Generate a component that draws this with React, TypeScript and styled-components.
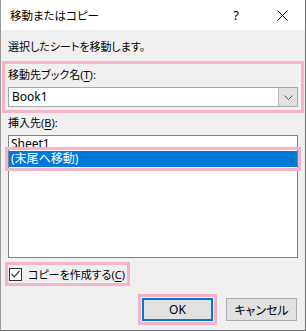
import React from 'react';
import styled, { createGlobalStyle } from 'styled-components';

const GlobalStyle = createGlobalStyle`
  html, body {
    margin: 0;
    padding: 0;
    background: #f0f0f0;
  }
  body {
    font-family: "Noto Sans", "Noto Sans CJK JP", sans-serif;
    font-size: 11px;
    color: #000;
  }
`;

const pink = '#f4b3c9';

const Window = styled.div`
  box-sizing: border-box;
  width: 306px;
  height: 331px;
  background: #f0f0f0;
  border-left: 1px solid #9a9a9a;
  border-right: 1px solid #6e6e6e;
  border-bottom: 1px solid #6e6e6e;
  display: flex;
  flex-direction: column;
  font-feature-settings: "palt";
`;

const TitleBar = styled.div`
  height: 30px;
  background: #fff;
  display: flex;
  align-items: center;
  padding-left: 9px;
  flex-shrink: 0;
`;

const Title = styled.span`
  flex: 1;
  font-size: 11.5px;
`;

const TitleButton = styled.div`
  width: 46px;
  height: 30px;
  display: flex;
  align-items: center;
  justify-content: center;
  font-size: 13px;
`;

const Body = styled.div`
  padding: 0 7px;
  display: flex;
  flex-direction: column;
`;

const Message = styled.div`
  height: 16px;
  line-height: 16px;
  margin-top: 9px;
`;

const Section = styled.div`
  outline: 3px solid ${pink};
  margin: 9px -3px 0;
  padding: 3px 3px 3px;
`;

const Label = styled.div`
  height: 16px;
  line-height: 16px;
`;

const Key = styled.span`
  text-decoration: underline;
  text-underline-offset: 2px;
`;

const Combo = styled.div`
  margin-top: 4px;
  height: 20px;
  box-sizing: border-box;
  border: 1px solid #a8a8a8;
  background: #fff;
  display: flex;
  align-items: center;
`;

const ComboText = styled.span`
  flex: 1;
  padding-left: 3px;
  line-height: 16px;
  font-size: 12px;
`;

const DropButton = styled.div`
  width: 18px;
  height: 18px;
  border-left: 1px solid #b9b9b9;
  background: #e1e1e1;
  display: flex;
  align-items: center;
  justify-content: center;
`;

const SubLabel = styled(Label)`
  margin-top: 5px;
`;

const ListBox = styled.div`
  margin-top: 4px;
  height: 123px;
  box-sizing: border-box;
  border: 1px solid #828282;
  background: #fff;
`;

const Item = styled.div<{ $selected?: boolean }>`
  height: ${p => (p.$selected ? 16 : 15)}px;
  line-height: ${p => (p.$selected ? 16 : 15)}px;
  padding-left: 2px;
  font-size: 12px;
  color: ${p => (p.$selected ? '#fff' : '#000')};
  background: ${p => (p.$selected ? '#0078d7' : 'transparent')};
  ${p => p.$selected && `outline: 3px solid ${pink}; outline-offset: 1px;`}
`;

const CheckRow = styled.div`
  outline: 3px solid ${pink};
  margin-top: 7px;
  align-self: flex-start;
  height: 18px;
  padding: 0 2px 0 1px;
  display: flex;
  align-items: center;
  gap: 6px;
`;

const CheckBox = styled.div`
  width: 13px;
  height: 13px;
  box-sizing: border-box;
  border: 1px solid #333;
  background: #fff;
  display: flex;
  align-items: center;
  justify-content: center;
`;

const Footer = styled.div`
  margin-top: 15px;
  display: flex;
  justify-content: flex-end;
  gap: 13px;
  padding-right: 1px;
`;

const Button = styled.div<{ $primary?: boolean }>`
  width: 71px;
  height: 23px;
  box-sizing: border-box;
  background: #e1e1e1;
  border: ${p => (p.$primary ? '2px solid #0078d7' : '1px solid #adadad')};
  display: flex;
  align-items: center;
  justify-content: center;
  font-size: 12px;
  ${p => p.$primary && `outline: 3px solid ${pink}; outline-offset: 1px;`}
`;

const Chevron = () => (
  <svg width="9" height="5" viewBox="0 0 9 5">
    <path d="M0.5 0.5 L4.5 4.5 L8.5 0.5" fill="none" stroke="#555" strokeWidth="1" />
  </svg>
);

const CloseIcon = () => (
  <svg width="11" height="11" viewBox="0 0 11 11">
    <path d="M0.5 0.5 L10.5 10.5 M10.5 0.5 L0.5 10.5" stroke="#000" strokeWidth="1" />
  </svg>
);

const Check = () => (
  <svg width="9" height="8" viewBox="0 0 9 8">
    <path d="M0.5 4 L3.3 6.8 L8.5 0.8" fill="none" stroke="#333" strokeWidth="1.2" />
  </svg>
);

export default function App() {
  return (
    <>
      <GlobalStyle />
      <Window>
        <TitleBar>
          <Title>移動またはコピー</Title>
          <TitleButton>?</TitleButton>
          <TitleButton>
            <CloseIcon />
          </TitleButton>
        </TitleBar>
        <Body>
          <Message>選択したシートを移動します。</Message>
          <Section>
            <Label>
              移動先ブック名(<Key>T</Key>):
            </Label>
            <Combo>
              <ComboText>Book1</ComboText>
              <DropButton>
                <Chevron />
              </DropButton>
            </Combo>
          </Section>
          <SubLabel>
            挿入先(<Key>B</Key>):
          </SubLabel>
          <ListBox>
            <Item>Sheet1</Item>
            <Item $selected>(末尾へ移動)</Item>
          </ListBox>
          <CheckRow>
            <CheckBox>
              <Check />
            </CheckBox>
            <span>
              コピーを作成する(<Key>C</Key>)
            </span>
          </CheckRow>
          <Footer>
            <Button $primary>OK</Button>
            <Button>キャンセル</Button>
          </Footer>
        </Body>
      </Window>
    </>
  );
}
